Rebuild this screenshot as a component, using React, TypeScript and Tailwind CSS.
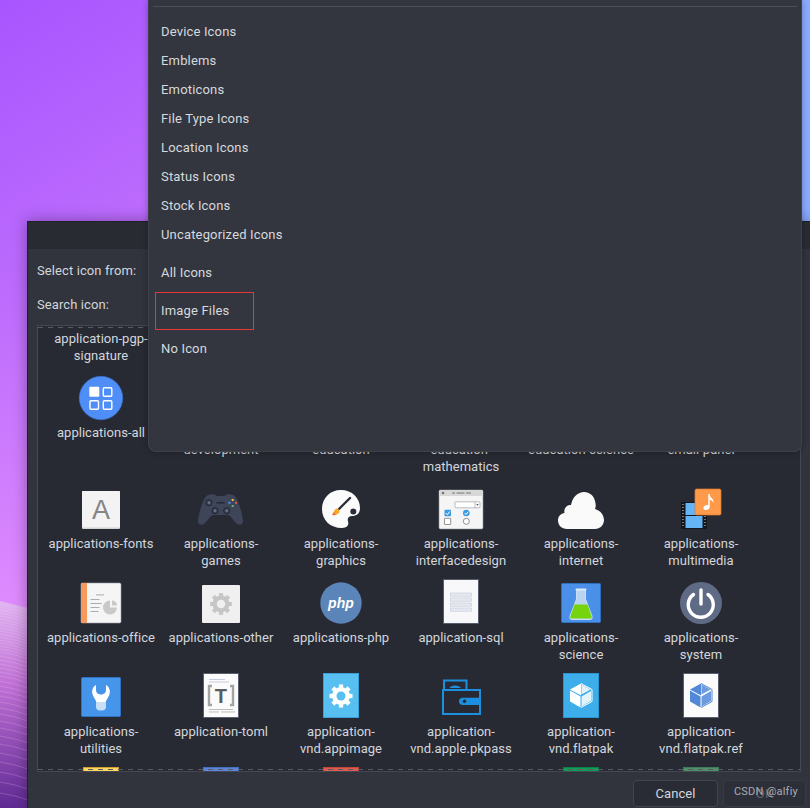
import { ReactElement, ReactNode } from 'react';

const MENU_ROWS = [
    'Device Icons',
    'Emblems',
    'Emoticons',
    'File Type Icons',
    'Location Icons',
    'Status Icons',
    'Stock Icons',
    'Uncategorized Icons'
];

const WAVE_LINES = [
    18, 21, 24, 27, 30, 33, 36, 39, 42, 45, 48, 51, 54, 57, 60, 63, 66, 70, 74, 78, 82, 86, 90, 95, 100, 105, 110, 116,
    122, 128, 135, 142, 150, 158, 167, 176, 186, 196, 207
];

const Icon = ({ children }: { children?: ReactNode }): ReactElement => (
    <svg viewBox="0 0 48 48" className="block w-12 h-12 shrink-0">{children}</svg>
);

// gear with eight teeth, used by the "other" and appimage icons
const Gear = ({ cx, cy, r, color, hole }: { cx: number; cy: number; r: number; color: string; hole: string }): ReactElement => (
    <g>
        {[0, 45, 90, 135, 180, 225, 270, 315].map((a) => (
            <rect
                key={a}
                x={cx - r * 0.24}
                y={cy - r * 1.28}
                width={r * 0.48}
                height={r * 0.6}
                fill={color}
                transform={`rotate(${a} ${cx} ${cy})`}
            />
        ))}
        <circle cx={cx} cy={cy} r={r} fill={color} />
        <circle cx={cx} cy={cy} r={r * 0.5} fill={hole} />
    </g>
);

const Cube = ({ color }: { color: string }): ReactElement => (
    <g>
        <path d="M13 16.5 24 10.5V22.5ZM13 17.5 23.5 23.5V34.5L13 28.5Z" fill={color} />
        <path d="M24 10.5 35 16.5V28.5L24 34.5" fill="none" stroke={color} strokeWidth="1" />
        <path d="M24.5 23.5 34 18V28L24.5 33.5ZM24.5 11.5 33.5 16.5 24.5 21.5Z" fill={color} opacity="0.85" />
    </g>
);

const AllIcon = () => (
    <Icon>
        <circle cx="24" cy="24" r="21.7" fill="#4f8ef7" stroke="#3a75d8" strokeWidth="0.6" />
        <rect x="12.3" y="12.7" width="10" height="10" rx="1" fill="#fff" />
        <rect x="26.3" y="13.7" width="8.5" height="8.5" rx="1" fill="none" stroke="#fff" strokeWidth="1.4" />
        <rect x="13" y="26.7" width="8.5" height="8.5" rx="1" fill="none" stroke="#fff" strokeWidth="1.4" />
        <rect x="26.3" y="26.7" width="8.5" height="8.5" rx="1" fill="none" stroke="#fff" strokeWidth="1.4" />
    </Icon>
);

const FontsIcon = () => (
    <Icon>
        <rect x="5" y="6" width="38" height="38" rx="1" fill="#d2d2d2" />
        <rect x="5" y="6" width="38" height="36.5" rx="1" fill="#f3f3f3" />
        <text x="24" y="34" textAnchor="middle" fontFamily="Liberation Sans, sans-serif" fontSize="27" fill="#858585">A</text>
    </Icon>
);

const GamesIcon = () => (
    <Icon>
        <path
            d="M11 10C14 8.5 18 9 19.5 11H27.5C29 9 33 8.5 36 10 41 12 45 28 46 35 46.5 40 42 41 39 38 36 35 34 31 31 30H16C13 31 11 35 8 38 5 41 .5 40 1 35 2 28 6 12 11 10Z"
            fill="#3e4558"
        />
        <circle cx="12" cy="17.7" r="3" fill="none" stroke="#1f2330" strokeWidth="1" />
        <circle cx="12" cy="17.7" r="1.3" fill="#6b7285" />
        <circle cx="18" cy="25.7" r="3" fill="none" stroke="#1f2330" strokeWidth="1" />
        <circle cx="18" cy="25.7" r="1.3" fill="#6b7285" />
        <circle cx="29.7" cy="25.7" r="3" fill="none" stroke="#1f2330" strokeWidth="1" />
        <circle cx="29.7" cy="25.7" r="1.3" fill="#6b7285" />
        <rect x="19.5" y="17" width="8" height="1.5" fill="#232733" />
        <rect x="34.7" y="14" width="2" height="2" fill="#f1c232" />
        <rect x="31.4" y="16.8" width="2" height="2" fill="#4f8ef7" />
        <rect x="38" y="16.8" width="2" height="2" fill="#e0524a" />
        <rect x="34.7" y="20" width="2" height="2" fill="#5cb85c" />
    </Icon>
);

const GraphicsIcon = () => (
    <Icon>
        <path
            d="M24 5C35 5 43 13 43 23 43 29 39 31 35 31 32 31 30 33 31 36 32 39 31 43 25 43 13 43 5 35 5 24 5 13 13 5 24 5Z"
            fill="#fbfbfb"
        />
        <path d="M33 13 22 24" stroke="#2b2d36" strokeWidth="2.4" strokeLinecap="round" />
        <path d="M20 23.5C22 24 23 25.5 22.5 27 21.5 29.5 18.5 30.5 15 30 17 28.5 16.5 24.5 20 23.5Z" fill="#f9a825" />
        <path d="M15 30C16 29 16.5 28 16.8 27L19 29.8C17.5 30.2 16 30.2 15 30Z" fill="#f0702a" />
        <circle cx="36.3" cy="26.5" r="3" fill="#2b2d36" />
    </Icon>
);

const InterfaceIcon = () => (
    <Icon>
        <rect x="2" y="5" width="44" height="39" rx="1.5" fill="#f5f5f5" stroke="#8d9098" strokeWidth="0.6" />
        <path d="M2 11V6.5Q2 5 3.5 5H44.5Q46 5 46 6.5V11Z" fill="#d8d8d8" />
        <circle cx="6" cy="8" r="1.3" fill="#777" />
        <rect x="15" y="7.5" width="3" height="1" fill="#777" />
        <rect x="19.5" y="7.5" width="8" height="1" fill="#777" />
        <rect x="29" y="7.5" width="5" height="1" fill="#777" />
        <rect x="18" y="16.8" width="25" height="6" rx="1" fill="#fff" stroke="#8d9098" strokeWidth="0.6" />
        <path d="M38 16.8V22.8" stroke="#8d9098" strokeWidth="0.6" />
        <path d="M39.2 19 40.5 20.8 41.8 19Z" fill="#555" />
        <rect x="7.5" y="24.8" width="6.5" height="6.5" rx="0.7" fill="#3b9ae1" />
        <path d="M8.8 28 10.4 29.8 12.8 26.4" stroke="#fff" strokeWidth="1" fill="none" />
        <circle cx="29.3" cy="28" r="3.3" fill="#3b9ae1" />
        <path d="M27.6 28 29 29.5 31.2 26.7" stroke="#fff" strokeWidth="1" fill="none" />
        <rect x="7.5" y="33.3" width="6.2" height="6.2" rx="0.5" fill="#fff" stroke="#666" strokeWidth="0.7" />
        <circle cx="29.3" cy="36.3" r="3" fill="#fff" stroke="#666" strokeWidth="0.7" />
    </Icon>
);

const InternetIcon = () => (
    <Icon>
        <path
            d="M10 44C4.5 44 1 40 1 35.5 1 31 4 28.5 7.5 28 6.5 23 10 19.5 14 20 15.5 12 21 7 27 7 33.5 7 38 12 38.5 18.5 39 21 38.5 23 38 24 43.5 25.5 47 30 47 35 47 40 43 44 38 44Z"
            fill="#fafafa"
        />
    </Icon>
);

const MultimediaIcon = () => (
    <Icon>
        <rect x="4" y="17" width="26" height="27" fill="#15171c" />
        {[19, 22, 25, 28, 31, 34, 37, 40].map((y) => (
            <g key={y}>
                <rect x="5" y={y} width="2" height="1" fill="#777" />
                <rect x="27" y={y} width="2" height="1" fill="#777" />
            </g>
        ))}
        <rect x="8.5" y="18" width="17" height="12" fill="#64b5f6" />
        <rect x="8.5" y="31" width="17" height="12" fill="#64b5f6" />
        <rect x="18" y="4" width="26" height="26" rx="1.5" fill="#ff9a4a" stroke="#dd7a2c" strokeWidth="0.7" />
        <path d="M32 9V22" stroke="#fff" strokeWidth="1.4" />
        <path d="M32 9C33 13 37 13 36.5 18 36 16 34 15 32.5 14.5Z" fill="#fff" />
        <ellipse cx="29.5" cy="22.5" rx="3.2" ry="2.4" fill="#fff" transform="rotate(-20 29.5 22.5)" />
    </Icon>
);

const OfficeIcon = () => (
    <Icon>
        <rect x="4" y="4" width="40" height="40" rx="1.5" fill="#f5f5f5" stroke="#9aa0aa" strokeWidth="0.6" />
        <path d="M5.5 4H10V44H5.5Q4 44 4 42.5V5.5Q4 4 5.5 4Z" fill="#f79a5a" />
        <rect x="19" y="15.5" width="8" height="0.8" fill="#9a9a9a" />
        <rect x="13.5" y="20" width="9" height="0.8" fill="#9a9a9a" />
        <rect x="13.5" y="24" width="11" height="0.8" fill="#9a9a9a" />
        <rect x="13.5" y="28" width="9" height="0.8" fill="#9a9a9a" />
        <rect x="13.5" y="32" width="8" height="0.8" fill="#9a9a9a" />
        <path d="M33 21.5A7 7 0 1 0 40 28.5H33Z" fill="#c9c9c9" />
        <path d="M35 21.5V26.5H40C40 24 38 21.5 35 21.5Z" fill="#c9c9c9" />
    </Icon>
);

const OtherIcon = () => (
    <Icon>
        <rect x="5" y="6" width="38" height="38" rx="1" fill="#f0f0f0" />
        <Gear cx={24} cy={25} r={8.5} color="#c6c6c6" hole="#f0f0f0" />
    </Icon>
);

const PhpIcon = () => (
    <Icon>
        <circle cx="24" cy="24" r="20.7" fill="#5b85b8" />
        <text x="24" y="28.5" textAnchor="middle" fontFamily="Liberation Sans, sans-serif" fontSize="14" fontWeight="700" fontStyle="italic" fill="#fff">php</text>
    </Icon>
);

const SqlIcon = () => (
    <Icon>
        <rect x="6.5" y="0.5" width="35" height="44" fill="#f8f8fa" stroke="#565b6a" />
        {[14, 19, 24, 29].map((y) => (
            <rect key={y} x="13.5" y={y} width="21" height="3.2" fill="#e5e8f1" stroke="#c4c9d8" strokeWidth="0.6" />
        ))}
    </Icon>
);

const ScienceIcon = () => (
    <Icon>
        <rect x="4.5" y="4.5" width="39" height="39" rx="1" fill="#4a90e8" stroke="#2e6fc0" />
        <path d="M19.5 10.5H28.5V20L35 37Q36 40.5 33 40.5H15Q12 40.5 13 37L19.5 20Z" fill="#b8d4f2" stroke="#dbe9f8" strokeWidth="0.8" />
        <rect x="18.5" y="9.5" width="11" height="2" rx="1" fill="#dbe9f8" />
        <path d="M17.5 25.5H30.5L34.5 37Q35.5 39.5 33 39.5H15Q12.5 39.5 13.5 37Z" fill="#76d40e" />
    </Icon>
);

const SystemIcon = () => (
    <Icon>
        <circle cx="24" cy="24" r="21" fill="#5f6b85" />
        <path d="M16.5 15.5A12.5 12.5 0 1 0 31 15.5" fill="none" stroke="#fff" strokeWidth="3.4" strokeLinecap="round" />
        <path d="M24 11V25" stroke="#fff" strokeWidth="3.4" strokeLinecap="round" />
    </Icon>
);

const UtilitiesIcon = () => (
    <Icon>
        <rect x="4.5" y="4.5" width="39" height="39" rx="1" fill="#4596ea" stroke="#2f74c4" />
        <rect x="19" y="27" width="10" height="10.5" rx="4" fill="#c7e0f8" />
        <path
            d="M19 12C15.5 14 14.5 18 15.5 21 16.5 25 19 26.5 19 29H29C29 26.5 31.5 25 32.5 21 33.5 18 32.5 14 29 12V17C29 20 26.5 21.5 24 21.5 21.5 21.5 19 20 19 17Z"
            fill="#fff"
        />
    </Icon>
);

const TomlIcon = () => (
    <Icon>
        <rect x="6.5" y="0.5" width="35" height="44" fill="#fbfbfb" stroke="#5a5f70" />
        <rect x="12" y="6" width="16" height="1" fill="#c9cce0" />
        <rect x="12" y="8.5" width="20" height="1" fill="#c9cce0" />
        <path d="M15 13H12V32H15M33 13H36V32H33" fill="none" stroke="#a3a3a3" strokeWidth="2.4" />
        <text x="24" y="30" textAnchor="middle" fontFamily="Liberation Sans, sans-serif" fontSize="20" fontWeight="700" fill="#5c5c5c">T</text>
        <rect x="12" y="36" width="24" height="0.9" fill="#b5b5b5" />
        <rect x="12" y="38.5" width="10" height="0.9" fill="#b5b5b5" />
        <rect x="24" y="38.5" width="14" height="0.9" fill="#b5b5b5" />
    </Icon>
);

const AppimageIcon = () => (
    <Icon>
        <rect x="6.5" y="0.5" width="35" height="44" fill="#57c0f0" stroke="#3d9fd8" />
        <Gear cx={24} cy={23} r={9} color="#ffffff" hole="#57c0f0" />
    </Icon>
);

const PkpassIcon = () => (
    <Icon>
        <path d="M7 16V7.5H29.5V16" fill="none" stroke="#1d8fe0" strokeWidth="2" />
        <path d="M12.5 15C14 11.5 22 11.5 24 15Z" fill="#1d8fe0" />
        <rect x="6" y="17" width="37" height="24" fill="none" stroke="#1d8fe0" strokeWidth="2" />
        <path d="M26 24.7H43V32H26Q22 32 22 28.3 22 24.7 26 24.7Z" fill="#1d8fe0" />
        <circle cx="27.5" cy="28.3" r="1.7" fill="#22252d" />
    </Icon>
);

const FlatpakIcon = () => (
    <Icon>
        <rect x="6.5" y="0.5" width="35" height="44" fill="#3daee9" stroke="#2b95d0" />
        <Cube color="#ffffff" />
    </Icon>
);

const FlatpakRefIcon = () => (
    <Icon>
        <rect x="6.5" y="0.5" width="35" height="44" fill="#fbfbfb" stroke="#5a5f70" />
        <Cube color="#5288d8" />
    </Icon>
);

const PartialIcon = ({ fill, edge }: { fill: string; edge: string }): ReactElement => (
    <Icon>
        <rect x="6.5" y="0.5" width="35" height="44" fill={fill} stroke={edge} />
    </Icon>
);

const Tile = ({ icon, label }: { icon?: ReactElement; label?: string }): ReactElement => (
    <div className="flex flex-col items-center pb-[10px]">
        {icon ?? <Icon />}
        {label && (
            <span className="mt-[2px] w-[110px] whitespace-pre-line text-center text-[13px] leading-[17px] tracking-[0.03px] text-[#d3d6dc]">{label}</span>
        )}
    </div>
);

const App = (): ReactElement => {
    return (
        <div className="relative w-[810px] h-[808px] overflow-hidden font-[Roboto,sans-serif] bg-[linear-gradient(90deg,transparent_790px,#8cabff_790px),linear-gradient(150deg,#a855ff_0%,#bd6cfd_24%,#dc88fe_46%,#f7a6ff_64%,#f0a0fa_100%)]">
            {/* wave in the wallpaper, bottom left */}
            <svg viewBox="0 0 28 218" className="absolute left-0 top-[590px] w-[28px] h-[218px]">
                <defs>
                    <linearGradient id="wave" x1="0" y1="0" x2="0" y2="1">
                        <stop offset="0" stopColor="#e2b4f2" />
                        <stop offset="0.4" stopColor="#c070d6" />
                        <stop offset="1" stopColor="#5f2a93" />
                    </linearGradient>
                </defs>
                <path d="M0 11 28 18V218H0Z" fill="url(#wave)" />
                {WAVE_LINES.map((y) => (
                    <path key={y} d={`M0 ${y - 4}Q14 ${y - 2} 28 ${y + 3}`} fill="none" stroke="#f0d4f8" strokeOpacity="0.22" strokeWidth="1" />
                ))}
            </svg>

            {/* dialog window, runs off the right and bottom of the shot */}
            <div className="absolute left-[27px] top-[221px] w-[783px] h-[587px] flex flex-col bg-[#31343d] border-l border-t border-[#1f2128] shadow-[0_0_14px_rgba(0,0,0,0.35)] text-[13px] tracking-[0.1px] text-[#d3d6dc]">
                <div className="h-[27px] shrink-0 bg-[#292b33]" />
                <div className="flex flex-col pl-[9px] pr-[9px] pt-[5px]">
                    <div className="h-[34px] flex items-center">Select icon from:</div>
                    <div className="h-[34px] flex items-center">Search icon:</div>
                    <div className="relative mt-[3px] h-[447px] overflow-hidden border border-[#454852] bg-[#282a33]">
                        <div className="grid grid-cols-[repeat(6,120px)] pl-[3px] -mt-[46px]">
                            <Tile label="application-pgp-signature" />
                            <Tile />
                            <Tile />
                            <Tile />
                            <Tile />
                            <Tile />

                            <Tile icon={<AllIcon />} label="applications-all" />
                            <Tile label="applications-development" />
                            <Tile label="applications-education" />
                            <Tile label="applications-education-mathematics" />
                            <Tile label="applications-education-science" />
                            <Tile label={'applications-\nemail-panel'} />

                            <Tile icon={<FontsIcon />} label="applications-fonts" />
                            <Tile icon={<GamesIcon />} label="applications-games" />
                            <Tile icon={<GraphicsIcon />} label="applications-graphics" />
                            <Tile icon={<InterfaceIcon />} label="applications-interfacedesign" />
                            <Tile icon={<InternetIcon />} label="applications-internet" />
                            <Tile icon={<MultimediaIcon />} label="applications-multimedia" />

                            <Tile icon={<OfficeIcon />} label="applications-office" />
                            <Tile icon={<OtherIcon />} label="applications-other" />
                            <Tile icon={<PhpIcon />} label="applications-php" />
                            <Tile icon={<SqlIcon />} label="application-sql" />
                            <Tile icon={<ScienceIcon />} label="applications-science" />
                            <Tile icon={<SystemIcon />} label="applications-system" />

                            <Tile icon={<UtilitiesIcon />} label="applications-utilities" />
                            <Tile icon={<TomlIcon />} label="application-toml" />
                            <Tile icon={<AppimageIcon />} label="application-vnd.appimage" />
                            <Tile icon={<PkpassIcon />} label="application-vnd.apple.pkpass" />
                            <Tile icon={<FlatpakIcon />} label="application-vnd.flatpak" />
                            <Tile icon={<FlatpakRefIcon />} label="application-vnd.flatpak.ref" />

                            <Tile icon={<PartialIcon fill="#ffd75e" edge="#d0a030" />} />
                            <Tile icon={<PartialIcon fill="#5b85d8" edge="#4a6fc0" />} />
                            <Tile icon={<PartialIcon fill="#e05a50" edge="#c8453c" />} />
                            <Tile />
                            <Tile icon={<PartialIcon fill="#0f9d58" edge="#0c8049" />} />
                            <Tile icon={<PartialIcon fill="#4e9068" edge="#417a58" />} />
                        </div>
                        {/* scroll undershoot dashes */}
                        <div className="absolute left-0 right-0 top-px h-px bg-[repeating-linear-gradient(90deg,#585b64_0_5px,transparent_5px_10px)]" />
                        <div className="absolute left-0 right-0 bottom-px h-px bg-[repeating-linear-gradient(90deg,#585b64_0_5px,transparent_5px_10px)]" />
                    </div>
                </div>
                <div className="flex justify-end gap-[5px] pt-[8px] pr-[4px]">
                    <button className="w-[85px] h-[27px] rounded-[4px] border border-[#42454e] bg-[#2a2c35] text-[13px] text-[#d3d6dc]">
                        Cancel
                    </button>
                    <button className="w-[83px] h-[27px] rounded-[4px] border border-[#383b44] bg-[#2d2f38] text-[13px] text-[#62656d]">
                        OK
                    </button>
                </div>
            </div>

            {/* open combo popup */}
            <div className="absolute left-[148px] top-0 w-[654px] h-[452px] flex flex-col bg-[#33363f] border-x border-b border-[#3e414a] rounded-b-lg shadow-[0_0_6px_rgba(0,0,0,0.3)] text-[13px] tracking-[0.17px] text-[#d6d9de]">
                <div className="mt-[6px] mx-[4px] h-px shrink-0 bg-[#4a4d56]" />
                <div className="mt-[10px] flex flex-col">
                    {MENU_ROWS.map((row) => (
                        <div key={row} className="h-[29px] pl-[12px] flex items-center">{row}</div>
                    ))}
                </div>
                <div className="mt-[5px] flex flex-col">
                    <div className="h-[38px] pl-[12px] flex items-center">All Icons</div>
                    <div className="relative h-[38px] pl-[12px] flex items-center">
                        Image Files
                        <div className="absolute left-[6px] top-0 w-[99px] h-[38px] border border-[#e53935]" />
                    </div>
                    <div className="h-[38px] pl-[12px] flex items-center">No Icon</div>
                </div>
            </div>

            {/* site watermark */}
            <span className="absolute left-[734px] top-[785px] text-[11px] leading-[14px] tracking-[0.2px] text-[#a9abb0]">CSDN @alfiy</span>
        </div>
    );
};

export default App;
